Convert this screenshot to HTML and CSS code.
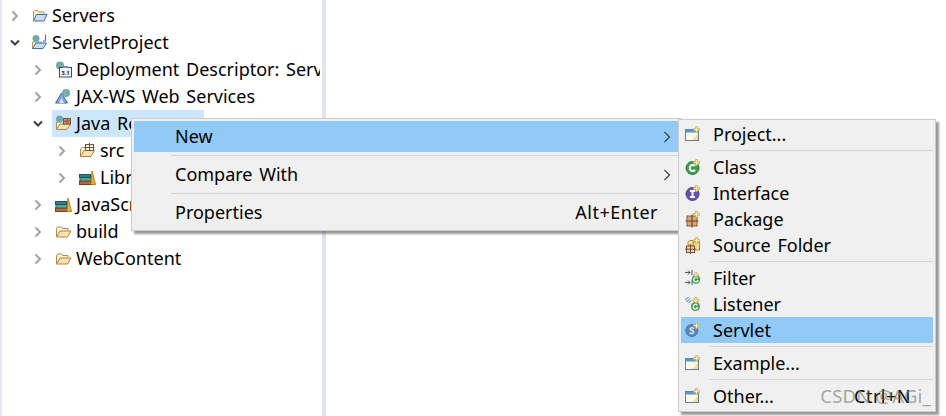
FILE: index.html
```html
<!DOCTYPE html>
<html lang="en">
<head>
  <meta charset="UTF-8">
  <meta name="viewport" content="width=device-width, initial-scale=1.0">
  <title>ServletProject - New</title>
  <link rel="stylesheet" href="styles.css">
</head>
<body>

<svg class="icon-defs" width="0" height="0">
  <defs>
    <symbol id="closed" viewBox="0 0 10 12"><path d="M2.500 1.500 7 6l-4.500 4.500" fill="none" stroke="#a3a3a3" stroke-width="2"/></symbol>
    <symbol id="open" viewBox="0 0 10 12"><path d="M1 3.500 5 7.500l4-4" fill="none" stroke="#3c3c3c" stroke-width="2"/></symbol>
    <symbol id="arrow" viewBox="0 0 8 12"><path d="M1.500 1 6.500 6l-5 5" fill="none" stroke="#404040" stroke-width="1.200"/></symbol>

    <symbol id="star" viewBox="0 0 8 8"><path d="M3 .5h2v2.500h2.500v2H5v2.500H3V5H.5V3H3z" fill="#fff6c8" stroke="#c9a13c" stroke-width=".9"/></symbol>

    <symbol id="folder-blue" viewBox="0 0 17 17"><path d="M2.500 13.500v-9l1-1h3.500l1 1.500h5v2" fill="#f6edc8" stroke="#b89a5c"/><path d="M2.500 14h10.500l3-6.500H5.500z" fill="#c8dcf2" stroke="#3e6ea8"/></symbol>
    <symbol id="folder-tan" viewBox="0 0 17 17"><path d="M1.500 13.500v-8l1-1.500h4l1 1.500h5.500v2" fill="#fdf1d8" stroke="#b08a58"/><path d="M1.500 14h11l3.500-6H5z" fill="#fbe2b0" stroke="#b8803f"/></symbol>
    <symbol id="project" viewBox="0 0 17 17"><path d="M1.500 14V8h9v2" fill="#f6edc8" stroke="#b89a5c"/><path d="M1.500 14.500H12l3.500-5.500H5z" fill="#c8dcf2" stroke="#3e6ea8"/><circle cx="5" cy="4.500" r="3.500" fill="#6aa6cf"/><path d="M3 3l2-1.500 1 2-2 1 .5 2.500-1.500-1.500z" fill="#7fae5a"/><path d="M14.500 .5v5.500q0 1.500-2.500 1" fill="none" stroke="#4a78a8" stroke-width="1.200"/></symbol>
    <symbol id="descriptor" viewBox="0 0 17 17"><circle cx="5" cy="4.500" r="4" fill="#6aa6cf"/><path d="M2.500 3 5 1l1.500 2L4 5l1 3-2.500-2z" fill="#7fae5a"/><rect x="4.500" y="6.500" width="12" height="9.500" fill="#f4f6fa" stroke="#3b4a63"/><rect x="8" y="5" width="5" height="2" fill="#7f8ea6"/><text class="version" x="10.500" y="14" text-anchor="middle">3.1</text></symbol>
    <symbol id="jaxws" viewBox="0 0 17 17"><path d="M.5 15 6.500 5l6 10z" fill="#86a3d6" stroke="#46659f"/><path d="M4 15l2.500-5 2.500 5z" fill="#dbe4f4"/><circle cx="11" cy="5" r="4" fill="#6aa6cf"/><path d="M9 3.500 11 1.500l1.500 2L10.500 5l1 3-2.500-1.500z" fill="#9cb56a"/></symbol>
    <symbol id="resources" viewBox="0 0 17 17"><path d="M1.500 14V7h5" fill="#fdf1d8" stroke="#b08a58"/><path d="M1.500 14.500H12l3.500-5.500H5z" fill="#fbe2b0" stroke="#b8803f"/><circle cx="4.500" cy="4" r="3.500" fill="#6aa6cf"/><path d="M2.500 2.500 4.500 1 6 3 4 4.500l.5 2.500-2-1.500z" fill="#7fae5a"/><rect x="8.500" y="3.500" width="7" height="5.500" fill="#c79a6c" stroke="#7a5236"/><path d="M12 3.500V9M8.500 6.200h7" stroke="#7a5236"/></symbol>
    <symbol id="src" viewBox="0 0 17 17"><path d="M1.500 14V7l2-1.500h3" fill="#fdf1d8" stroke="#b08a58"/><path d="M1.500 14.500H12l3.500-6H5z" fill="#fbe2b0" stroke="#b8803f"/><rect x="6.500" y="2.500" width="8" height="6" fill="#fdf1e0" stroke="#7a5236"/><path d="M10.500 1v8M5.500 5.500h10" stroke="#7a5236"/></symbol>
    <symbol id="books" viewBox="0 0 17 17"><rect x=".5" y="12" width="12" height="3.500" fill="#c0673c" stroke="#7c3f22"/><rect x="1" y="8.500" width="11" height="3.500" fill="#5aa488" stroke="#2f6b56"/><rect x=".5" y="5.500" width="11" height="3" fill="#2f7f96" stroke="#1f4f66"/><path d="M12 15.500 13 2l3.500 13.500z" fill="#efb03c" stroke="#b77f1e"/></symbol>

    <symbol id="window" viewBox="0 0 17 17"><rect x=".5" y="3.500" width="13" height="11" fill="#fdf9e4" stroke="#6b7f99"/><rect x="1" y="4" width="12" height="2.500" fill="#4f9ad8"/><path d="M13 8v6H7z" fill="#f5dc9a"/><use href="#star" x="8" y="0" width="7" height="7"/></symbol>
    <symbol id="class" viewBox="0 0 17 17"><circle cx="7.500" cy="9" r="6.500" fill="#3f9c4c" stroke="#2a7a38"/><path d="M10 7A3 3 0 1 0 10 11" fill="none" stroke="#fff" stroke-width="2"/><use href="#star" x="8" y="0" width="7" height="7"/></symbol>
    <symbol id="interface" viewBox="0 0 17 17"><circle cx="7.500" cy="9" r="6.500" fill="#6a4fae" stroke="#52398f"/><path d="M5 6h5M5 12h5M7.500 6v6" fill="none" stroke="#fff" stroke-width="2"/><use href="#star" x="8" y="0" width="7" height="7"/></symbol>
    <symbol id="package" viewBox="0 0 17 17"><rect x="2" y="5" width="10" height="10" fill="#d6a77a" stroke="#8a5a3a"/><path d="M7 3.500v13M.5 10h13" stroke="#6e4228" stroke-width="1.100"/><use href="#star" x="8" y="0" width="7" height="7"/></symbol>
    <symbol id="source" viewBox="0 0 17 17"><path d="M3 8V5l2-1.500h5V8z" fill="#fbe6b0" stroke="#b0883c"/><rect x="8" y="5" width="6.500" height="8" fill="#f5d98a" stroke="#b0883c"/><rect x="1.500" y="9" width="8" height="6.500" fill="#e8d0b8" stroke="#7a5236"/><path d="M5.500 7.500v9.500M0 12.200h11" stroke="#7a5236"/><use href="#star" x="8" y="0" width="7" height="7"/></symbol>
    <symbol id="filter" viewBox="0 0 17 17"><path d="M0 2.500h5M3 .5l2 2-2 2M7 0v5M0 12.500h5M3 10.500l2 2-2 2M7 10v5" fill="none" stroke="#4e5a6e"/><circle cx="11" cy="9.500" r="4.200" fill="#3f9c4c"/><path d="M12.800 8.500A2.200 2.200 0 1 0 12.800 10.800h-1.300" fill="none" stroke="#fff" stroke-width="1.300"/><use href="#star" x="8" y="2" width="6" height="6"/></symbol>
    <symbol id="listener" viewBox="0 0 17 17"><path d="M0 4.500 3.500 1M1.500 6 5 2.500M3.500 7 6.500 4" fill="none" stroke="#3f6fb0"/><circle cx="10.500" cy="10.500" r="4.500" fill="#3f9c4c"/><path d="M12.500 9.500A2.300 2.300 0 1 0 12.500 12h-1.500" fill="none" stroke="#fff" stroke-width="1.300"/><use href="#star" x="7.500" y="1" width="7" height="7"/></symbol>
    <symbol id="servlet" viewBox="0 0 17 17"><circle cx="6.800" cy="8.500" r="6" fill="#5f86b8" stroke="#4a6f9f"/><path d="M9 6.500Q7 5 5.500 6.300 4.500 8 7 8.500 9.300 9.300 8.300 11 6.500 12 4.500 10.800" fill="none" stroke="#dfe8f4" stroke-width="1.400"/><use href="#star" x="8" y="0" width="7" height="7"/></symbol>
  </defs>
</svg>

<div class="workbench">
  <aside class="sidebar">
    <ul class="tree">
      <li class="row"><svg class="twist"><use href="#closed"/></svg><span class="label"><svg class="icon"><use href="#folder-blue"/></svg><span class="name">Servers</span></span></li>
      <li class="row"><svg class="twist"><use href="#open"/></svg><span class="label"><svg class="icon"><use href="#project"/></svg><span class="name">ServletProject</span></span></li>
      <li class="row depth-1"><svg class="twist"><use href="#closed"/></svg><span class="label"><svg class="icon"><use href="#descriptor"/></svg><span class="name">Deployment Descriptor: ServletProject</span></span></li>
      <li class="row depth-1"><svg class="twist"><use href="#closed"/></svg><span class="label"><svg class="icon"><use href="#jaxws"/></svg><span class="name">JAX-WS Web Services</span></span></li>
      <li class="row depth-1"><svg class="twist"><use href="#open"/></svg><span class="label selected"><svg class="icon"><use href="#resources"/></svg><span class="name">Java Resources</span></span></li>
      <li class="row depth-2"><svg class="twist"><use href="#closed"/></svg><span class="label"><svg class="icon"><use href="#src"/></svg><span class="name">src</span></span></li>
      <li class="row depth-2"><svg class="twist"><use href="#closed"/></svg><span class="label"><svg class="icon"><use href="#books"/></svg><span class="name">Libraries</span></span></li>
      <li class="row depth-1"><svg class="twist"><use href="#closed"/></svg><span class="label"><svg class="icon"><use href="#books"/></svg><span class="name">JavaScript Resources</span></span></li>
      <li class="row depth-1"><svg class="twist"><use href="#closed"/></svg><span class="label"><svg class="icon"><use href="#folder-tan"/></svg><span class="name">build</span></span></li>
      <li class="row depth-1"><svg class="twist"><use href="#closed"/></svg><span class="label"><svg class="icon"><use href="#folder-tan"/></svg><span class="name">WebContent</span></span></li>
    </ul>
  </aside>
  <main class="editor"></main>
</div>

<div class="menu context-menu">
  <div class="item active"><span class="text">New</span><svg class="more"><use href="#arrow"/></svg></div>
  <div class="sep"></div>
  <div class="item"><span class="text">Compare With</span><svg class="more"><use href="#arrow"/></svg></div>
  <div class="sep"></div>
  <div class="item"><span class="text">Properties</span><span class="keys">Alt+Enter</span><span class="more"></span></div>
</div>

<div class="menu sub-menu">
  <div class="item"><svg class="icon"><use href="#window"/></svg><span class="text">Project...</span></div>
  <div class="sep"></div>
  <div class="item"><svg class="icon"><use href="#class"/></svg><span class="text">Class</span></div>
  <div class="item"><svg class="icon"><use href="#interface"/></svg><span class="text">Interface</span></div>
  <div class="item"><svg class="icon"><use href="#package"/></svg><span class="text">Package</span></div>
  <div class="item"><svg class="icon"><use href="#source"/></svg><span class="text">Source Folder</span></div>
  <div class="sep"></div>
  <div class="item"><svg class="icon"><use href="#filter"/></svg><span class="text">Filter</span></div>
  <div class="item"><svg class="icon"><use href="#listener"/></svg><span class="text">Listener</span></div>
  <div class="item active"><svg class="icon"><use href="#servlet"/></svg><span class="text">Servlet</span></div>
  <div class="sep"></div>
  <div class="item"><svg class="icon"><use href="#window"/></svg><span class="text">Example...</span></div>
  <div class="sep"></div>
  <div class="item"><svg class="icon"><use href="#window"/></svg><span class="text">Other...</span><span class="keys">Ctrl+N</span></div>
</div>

<div class="watermark">CSDN @AGi_</div>

</body>
</html>
```

FILE: styles.css
```css
body {
  font-family: "Noto Sans", "Open Sans", Arial, sans-serif;
  font-size: 18px;
  word-spacing: 2px;
  color: #000000;
  margin: 0;
  height: 416px;
  overflow: hidden;
  background-color: #ffffff;
}

.icon-defs {
  position: absolute;
}

.version {
  font-size: 6px;
  font-weight: 700;
  word-spacing: 0;
  fill: #1d2a44;
}

.workbench {
  display: flex;
  height: 100%;
}

.sidebar {
  width: 318px;
  padding: 2px 2px 0 0;
  border-left: 2px solid #e6e9f5;
}

.editor {
  flex: 1;
  border-left: 4px solid #dfe3f4;
}

.tree {
  list-style: none;
  margin: 0;
  padding: 0;
  overflow: hidden;
}

.row {
  display: flex;
  align-items: center;
  height: 27px;
  padding-left: 8px;
  white-space: nowrap;
}

.row.depth-1 {
  padding-left: 31px;
}

.row.depth-2 {
  padding-left: 55px;
}

.twist {
  width: 10px;
  height: 12px;
  flex: none;
  margin-right: 8px;
}

.row.depth-1 .twist,
.row.depth-2 .twist {
  margin-right: 9px;
}

.label {
  display: flex;
  align-items: center;
  gap: 4px;
  height: 27px;
  padding-left: 3px;
}

.label.selected {
  width: 149px;
  background-color: #cce6ff;
}

.name {
  padding-bottom: 2px;
}

.icon {
  width: 17px;
  height: 17px;
  flex: none;
}

.menu {
  position: absolute;
  box-sizing: border-box;
  padding: 2px;
  background-color: #f0f0f0;
  border: 1px solid #cdcdcd;
  box-shadow: 3px 3px 2px rgba(0, 0, 0, 0.4);
}

.context-menu {
  left: 131px;
  top: 118px;
  width: 551px;
  z-index: 1;
}

.sub-menu {
  left: 678px;
  top: 119px;
  width: 258px;
  padding-top: 1px;
  z-index: 2;
}

.item {
  display: flex;
  align-items: center;
  white-space: nowrap;
}

.context-menu .item {
  height: 31px;
  padding-left: 41px;
}

.context-menu .text,
.context-menu .keys {
  padding-bottom: 2px;
}

.sub-menu .item {
  height: 26px;
  padding-left: 4px;
  gap: 11px;
}

.item.active {
  background-color: #91c9f7;
}

.text {
  flex: 1;
}

.keys {
  margin-right: 4px;
  letter-spacing: 0.5px;
}

.sub-menu .keys {
  margin-right: 22px;
}

.more {
  width: 8px;
  height: 12px;
  flex: none;
  margin: 0 8px 0 1px;
}

.sep {
  height: 1px;
  margin: 3px 0;
  background-color: #d4d4d4;
}

.context-menu .sep {
  margin-left: 37px;
}

.sub-menu .sep {
  margin-left: 28px;
}

.watermark {
  position: absolute;
  right: 15px;
  top: 383px;
  z-index: 3;
  font-size: 18.500px;
  word-spacing: 0;
  letter-spacing: 0.200px;
  color: rgba(120, 120, 120, 0.65);
}
```
